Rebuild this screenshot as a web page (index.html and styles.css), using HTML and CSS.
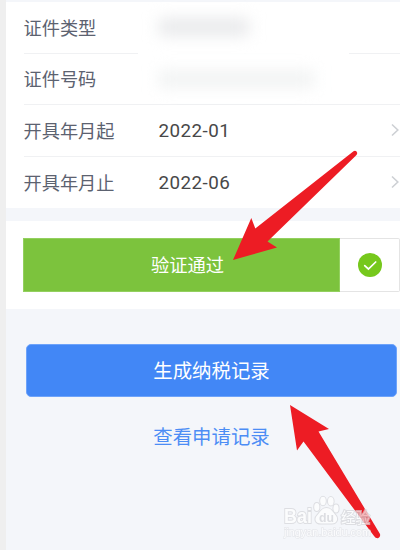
FILE: index.html
```html
<!DOCTYPE html>
<html lang="zh-CN">
<head>
    <meta charset="UTF-8">
    <meta name="viewport" content="width=device-width, initial-scale=1.0">
    <title>纳税记录</title>
    <link rel="stylesheet" href="styles.css">
</head>
<body>
    <div class="page">
        <div class="card">
            <div class="row row-masked">
                <span class="label">证件类型</span>
                <span class="mask mask-type"></span>
            </div>
            <div class="row">
                <span class="label">证件号码</span>
                <span class="mask mask-number"></span>
            </div>
            <div class="row">
                <span class="label">开具年月起</span>
                <span class="value">2022-01</span>
                <svg class="chevron" width="9" height="14" viewBox="0 0 9 14"><path d="M1 1.5 L6.8 7 L1 12.5"/></svg>
            </div>
            <div class="row">
                <span class="label">开具年月止</span>
                <span class="value">2022-06</span>
                <svg class="chevron" width="9" height="14" viewBox="0 0 9 14"><path d="M1 1.5 L6.8 7 L1 12.5"/></svg>
            </div>
        </div>

        <div class="verify">
            <div class="verify-bar">验证通过</div>
            <div class="verify-check">
                <svg width="24" height="24" viewBox="0 0 24 24">
                    <circle cx="12" cy="12" r="12" fill="#76c81c"/>
                    <path d="M6.7 12.6 L10.4 16 L17.7 9" fill="none" stroke="#fff" stroke-width="1.7" stroke-linecap="round"/>
                </svg>
            </div>
        </div>

        <button class="generate" type="button">生成纳税记录</button>
        <a class="history">查看申请记录</a>
    </div>

    <!-- red pointers -->
    <svg class="arrows" width="400" height="550" viewBox="0 0 400 550">
        <path d="M233 260 L251.3 218 L255.3 228.5 L353.5 151.2 Q356.3 150 357.3 153 Q357 154.8 355.5 156 L267.5 241.5 L277 247.5 Z"/>
        <path d="M290 405 L329 429 L318.5 431.5 L380 534 Q380.8 537 378 538.3 Q375.5 538.5 374 536 L303.5 441.5 L297 450.5 Z"/>
    </svg>

    <!-- watermark -->
    <svg class="watermark" width="400" height="550" viewBox="0 0 400 550">
        <text class="brand" x="284" y="523" textLength="28" lengthAdjust="spacingAndGlyphs">Bai</text>
        <g class="paw">
            <ellipse cx="316.8" cy="507" rx="2.6" ry="4"/>
            <ellipse cx="323" cy="501" rx="2.8" ry="4.2"/>
            <ellipse cx="330.8" cy="501.3" rx="2.8" ry="4.2"/>
            <ellipse cx="336" cy="508.5" rx="2.6" ry="4"/>
            <path d="M326.5 508 C331 508 332.5 511.5 335 514.5 C339 518.5 337 523.5 332 523.5 L321 523.5 C315 523.5 314 518.5 317.5 515 C320.5 511.5 322 508 326.5 508 Z"/>
        </g>
        <text class="du" x="319" y="522" textLength="15" lengthAdjust="spacingAndGlyphs">du</text>
        <text class="brand cn" x="341" y="522.5" textLength="29">经验</text>
        <text class="site" x="284" y="535.5" textLength="87" lengthAdjust="spacingAndGlyphs">jingyan.baidu.com</text>
    </svg>
</body>
</html>
```

FILE: styles.css
```css
* {
    box-sizing: border-box;
}
body {
    margin: 0;
    height: 550px;
    position: relative;
    overflow: hidden;
    font-family: "Noto Sans CJK SC", sans-serif;
    background-color: #efefef;
}
.page {
    height: 550px;
    margin-left: 6px;
    padding-top: 2px;
    background-color: #f4f6fa;
}
.card {
    height: 206px;
    padding-left: 17.5px;
    background-color: #fff;
}
.row {
    display: flex;
    align-items: center;
    height: 51.5px;
    border-bottom: 1px solid #f0f1f3;
}
.row:last-child {
    border-bottom: none;
}
/* the divider is hidden under the blurred area */
.row-masked {
    border-bottom: none;
    padding-bottom: 1px;
    background: linear-gradient(90deg, #f0f1f3 114px, transparent 114px, transparent 325px, #f0f1f3 325px) left bottom / 100% 1px no-repeat;
}
.label {
    width: 135px;
    padding-bottom: 1px;
    font-size: 18.2px;
    line-height: 26px;
    color: #5c6270;
}
.value {
    padding-top: 2px;
    font-family: Roboto, "Noto Sans CJK SC", sans-serif;
    font-size: 18.8px;
    line-height: 26px;
    letter-spacing: 0.45px;
    color: #484848;
}
.chevron {
    margin-left: auto;
    fill: none;
    stroke: #cdd0d4;
    stroke-width: 1.6;
}
/* blurred-out private values */
.mask {
    height: 16px;
    background-color: #e6e7e9;
    filter: blur(8px);
}
.mask-type {
    width: 90px;
}
.mask-number {
    width: 155px;
    background-color: #f0f2f2;
}
.verify {
    display: flex;
    height: 88px;
    margin-top: 13px;
    padding: 17px 0 17px 17px;
    background-color: #fff;
}
.verify-bar {
    width: 317px;
    border: 1px solid #93d05f;
    background-color: #7cc33d;
    color: #fff;
    font-size: 18.3px;
    line-height: 51px;
    padding-left: 12px;
    text-align: center;
}
.verify-check {
    display: flex;
    flex: 1;
    align-items: center;
    justify-content: center;
    border: 1px solid #e4e4e4;
    border-left: none;
    border-radius: 0 2px 2px 0;
}
.generate {
    display: block;
    width: 371px;
    height: 53px;
    margin: 35px 0 0 20px;
    padding: 0 0 2px;
    border: 1px solid #6ea3fa;
    border-radius: 5px;
    background-color: #4287f6;
    color: #fff;
    font-family: inherit;
    font-size: 19.4px;
    line-height: 48px;
}
.history {
    display: block;
    width: 371px;
    margin: 25px 0 0 20px;
    color: #4c8df5;
    font-size: 19.4px;
    line-height: 28px;
    text-align: center;
}
.arrows,
.watermark {
    position: absolute;
    top: 0;
    left: 0;
}
.arrows {
    fill: #ed1c24;
}
.watermark text,
.paw {
    fill: #fff;
    stroke: #d4d5d9;
    stroke-width: 2px;
    paint-order: stroke;
}
.watermark {
    opacity: 0.7;
}
.watermark .brand {
    font-family: "Liberation Sans", sans-serif;
    font-size: 20px;
    font-weight: bold;
}
.watermark .cn {
    font-family: "Noto Sans CJK SC", sans-serif;
    font-size: 14.5px;
    font-weight: normal;
}
.watermark .du {
    font-family: "Liberation Sans", sans-serif;
    font-size: 13px;
    font-weight: bold;
    fill: #d3d4d8;
    stroke: none;
}
.watermark .site {
    font-family: "Liberation Sans", sans-serif;
    font-size: 11px;
    stroke-width: 1.4px;
    stroke: #e1e2e6;
}
```
